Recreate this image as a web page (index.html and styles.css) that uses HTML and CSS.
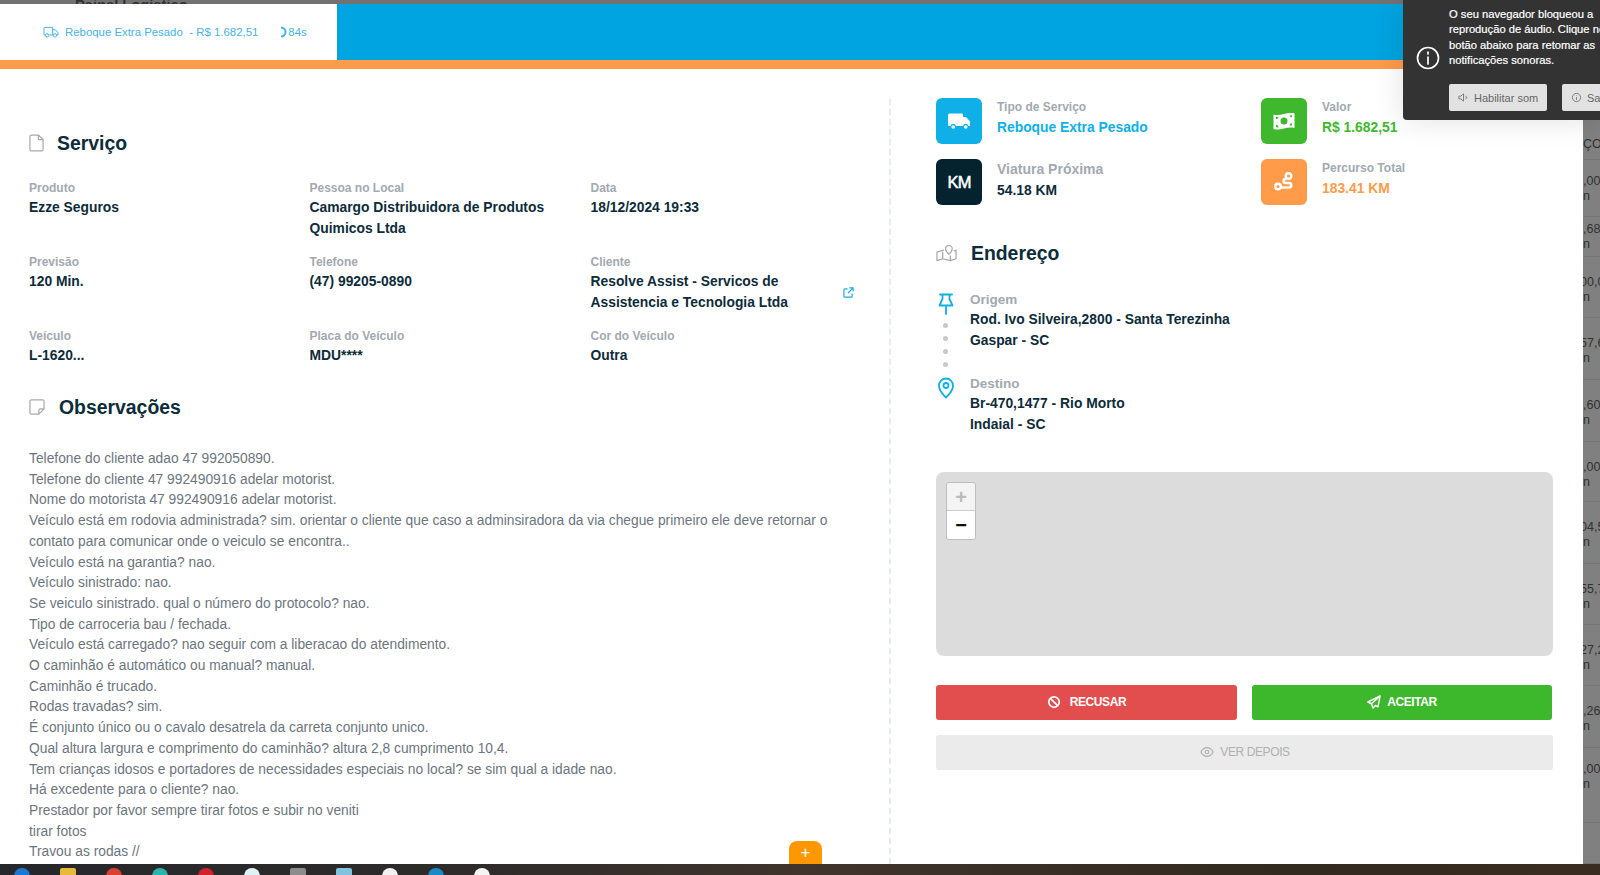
FILE: index.html
```html
<!DOCTYPE html>
<html lang="pt-BR">
<head>
<meta charset="utf-8">
<title>Painel Logístico</title>
<link rel="stylesheet" href="styles.css">
</head>
<body>
<div class="top-strip"><span class="top-title">Painel Logístico</span></div>
<div class="stage">
  <main class="modal">
    <header class="modal-head">
      <div class="tab">
        <svg class="tab-icon" viewBox="0 0 24 24"><path d="M1.5 16.5V6.5a1.5 1.5 0 0 1 1.5-1.500h11.500v11.500M9.500 16.500h6M14.500 8.500h4l4 4.500v3.500h-2M1.500 16.500h1"/><circle cx="6" cy="17" r="2.500"/><circle cx="18" cy="17" r="2.500"/></svg>
        <span class="tab-name">Reboque Extra Pesado</span>
        <span class="tab-price">- R$ 1.682,51</span>
        <svg class="tab-spin" viewBox="0 0 10 12"><path d="M3 1.500a4.500 4.500 0 0 1 0 9"/></svg>
        <span class="tab-time">84s</span>
      </div>
      <div class="head-fill"></div>
    </header>
    <div class="modal-body">
      <section class="left">
        <h2 class="title title-service">
          <svg class="title-icon" viewBox="0 0 16 19"><path d="M1 2.500A1.500 1.500 0 0 1 2.500 1H10l5 5v10.500a1.500 1.500 0 0 1-1.500 1.500h-11A1.500 1.500 0 0 1 1 16.500zM10 1v5h5"/></svg>
          Serviço
        </h2>
        <div class="facts">
          <div class="fact"><span class="label">Produto</span><span class="value">Ezze Seguros</span></div>
          <div class="fact"><span class="label">Pessoa no Local</span><span class="value">Camargo Distribuidora de Produtos Quimicos Ltda</span></div>
          <div class="fact"><span class="label">Data</span><span class="value">18/12/2024 19:33</span></div>
          <div class="fact"><span class="label">Previsão</span><span class="value">120 Min.</span></div>
          <div class="fact"><span class="label">Telefone</span><span class="value">(47) 99205-0890</span></div>
          <div class="fact fact-link"><span class="label">Cliente</span><span class="value">Resolve Assist - Servicos de Assistencia e Tecnologia Ltda</span>
            <svg class="ext" viewBox="0 0 12 12"><path d="M5 2H2a1 1 0 0 0-1 1v7a1 1 0 0 0 1 1h7a1 1 0 0 0 1-1V7M7 1h4v4M11 1 5.500 6.500"/></svg>
          </div>
          <div class="fact"><span class="label">Veículo</span><span class="value">L-1620...</span></div>
          <div class="fact"><span class="label">Placa do Veículo</span><span class="value">MDU****</span></div>
          <div class="fact"><span class="label">Cor do Veículo</span><span class="value">Outra</span></div>
        </div>
        <h2 class="title title-notes">
          <svg class="title-icon title-icon-note" viewBox="0 0 17 17"><path d="M16 10.500V2.500A1.500 1.500 0 0 0 14.500 1h-12A1.500 1.500 0 0 0 1 2.500v12A1.500 1.500 0 0 0 2.500 16h8zM16 10.500h-4a1.500 1.500 0 0 0-1.500 1.500v4"/></svg>
          Observações
        </h2>
        <div class="notes">
          <p>Telefone do cliente adao 47 992050890.</p>
          <p>Telefone do cliente 47 992490916 adelar motorist.</p>
          <p>Nome do motorista 47 992490916 adelar motorist.</p>
          <p>Veículo está em rodovia administrada? sim. orientar o cliente que caso a adminsiradora da via chegue primeiro ele deve retornar o contato para comunicar onde o veiculo se encontra..</p>
          <p>Veículo está na garantia? nao.</p>
          <p>Veículo sinistrado: nao.</p>
          <p>Se veiculo sinistrado. qual o número do protocolo? nao.</p>
          <p>Tipo de carroceria bau / fechada.</p>
          <p>Veículo está carregado? nao seguir com a liberacao do atendimento.</p>
          <p>O caminhão é automático ou manual? manual.</p>
          <p>Caminhão é trucado.</p>
          <p>Rodas travadas? sim.</p>
          <p>É conjunto único ou o cavalo desatrela da carreta conjunto unico.</p>
          <p>Qual altura largura e comprimento do caminhão? altura 2,8 cumprimento 10,4.</p>
          <p>Tem crianças idosos e portadores de necessidades especiais no local? se sim qual a idade nao.</p>
          <p>Há excedente para o cliente? nao.</p>
          <p>Prestador por favor sempre tirar fotos e subir no veniti</p>
          <p>tirar fotos</p>
          <p>Travou as rodas //</p>
        </div>
        <button class="fab">+</button>
      </section>
      <section class="right">
        <div class="cards">
          <div class="card">
            <div class="badge badge-blue"><svg viewBox="0 0 24 24"><path class="fill" d="M1 6A1.500 1.500 0 0 1 2.500 4.500H15a1 1 0 0 1 1 1V8h3l4 4.500V17h-1.600a2.700 2.700 0 0 0-5.300 0H8.900a2.700 2.700 0 0 0-5.300 0H2.500A1.500 1.500 0 0 1 1 15.500z"/><circle class="fill" cx="6.200" cy="18" r="1.800"/><circle class="fill" cx="18.800" cy="18" r="1.800"/></svg></div>
            <div class="card-text"><span class="label">Tipo de Serviço</span><span class="value">Reboque Extra Pesado</span></div>
          </div>
          <div class="card">
            <div class="badge badge-green"><svg viewBox="0 0 24 24"><path class="fill" fill-rule="evenodd" d="M1.500 5.500c7 2.200 13.500-3 21-1v14.500c-7.500-2-14 3.200-21 1zM12 8.500a3.500 3.500 0 1 0 0 7 3.500 3.500 0 0 0 0-7zM4 7.800v2.400a2.500 2.500 0 0 0 2.400-2zM20 6.300l-2.400.1a2.500 2.500 0 0 0 2.400 2zM4 15.800v2.400l2.400.2a2.500 2.500 0 0 0-2.400-2.600zM20 14.200a2.500 2.500 0 0 0-2.400 2.300l2.400.1z"/></svg></div>
            <div class="card-text"><span class="label">Valor</span><span class="value">R$ 1.682,51</span></div>
          </div>
          <div class="card">
            <div class="badge badge-dark"><span class="km">KM</span></div>
            <div class="card-text card-text-tall"><span class="label label-lg">Viatura Próxima</span><span class="value">54.18 KM</span></div>
          </div>
          <div class="card">
            <div class="badge badge-orange"><svg viewBox="0 0 24 24"><circle class="line-w" cx="16.500" cy="6" r="2.800"/><circle class="line-w" cx="6" cy="16.500" r="2.800"/><path class="line-w" d="M8.800 17.500H17a2.200 2.200 0 0 0 0-4.500h-3.500a2 2 0 0 1 0-4"/></svg></div>
            <div class="card-text"><span class="label">Percurso Total</span><span class="value">183.41 KM</span></div>
          </div>
        </div>
        <h2 class="title title-address">
          <svg class="title-icon title-icon-map" viewBox="0 0 22 18"><path d="M8 6 1 8v9l6-2 8 2 6-2V6l-2 .7M7 8v7M15 12v5"/><path d="M13.500 1a3.500 3.500 0 0 0-3.500 3.500c0 2.500 3.500 6 3.500 6s3.500-3.500 3.500-6A3.500 3.500 0 0 0 13.500 1z"/></svg>
          Endereço
        </h2>
        <div class="route">
          <div class="stop">
            <div class="stop-rail">
              <svg class="stop-icon" viewBox="0 0 18 22"><path d="M3 1.500h12M5.500 1.500V6L2.500 12.500h13L12.500 6V1.500M9 12.500V21"/></svg>
              <i class="dot"></i><i class="dot"></i><i class="dot"></i><i class="dot"></i>
            </div>
            <div class="stop-text"><span class="label label-stop">Origem</span><span class="value">Rod. Ivo Silveira,2800 - Santa Terezinha</span><span class="value">Gaspar - SC</span></div>
          </div>
          <div class="stop">
            <div class="stop-rail">
              <svg class="stop-icon" viewBox="0 0 18 22"><path d="M9 20.500S2 14 2 8.500a7 7 0 0 1 14 0C16 14 9 20.500 9 20.500z"/><circle cx="9" cy="8.500" r="2.500"/></svg>
            </div>
            <div class="stop-text"><span class="label label-stop">Destino</span><span class="value">Br-470,1477 - Rio Morto</span><span class="value">Indaial - SC</span></div>
          </div>
        </div>
        <div class="map">
          <div class="zoom">
            <button class="zoom-btn zoom-off">+</button>
            <button class="zoom-btn">−</button>
          </div>
        </div>
        <div class="actions">
          <button class="btn btn-red"><svg viewBox="0 0 16 16"><circle cx="8" cy="8" r="6"/><path d="m3.800 3.800 8.400 8.400"/></svg>RECUSAR</button>
          <button class="btn btn-green"><svg viewBox="0 0 16 16"><path d="M15 1 1 8l4 2 2 5 2.500-3 3 1.500zM15 1 5 10"/></svg>ACEITAR</button>
          <button class="btn btn-grey"><svg viewBox="0 0 16 16"><path d="M1 8s2.500-5 7-5 7 5 7 5-2.500 5-7 5-7-5-7-5z"/><circle cx="8" cy="8" r="2"/></svg>VER DEPOIS</button>
        </div>
      </section>
    </div>
  </main>
  <aside class="behind">
    <div class="row row-head"><span>ÇO</span></div>
    <div class="row row-mid"><span>,00</span><span>n</span></div>
    <div class="row row-short"><span>,68</span><span>n</span></div>
    <div class="row"><span class="clip">00,0</span><span>n</span></div>
    <div class="row"><span class="clip">57,6</span><span>n</span></div>
    <div class="row"><span>,60</span><span>n</span></div>
    <div class="row"><span>,00</span><span>n</span></div>
    <div class="row"><span class="clip">04,5</span><span>n</span></div>
    <div class="row"><span class="clip">55,7</span><span>n</span></div>
    <div class="row"><span class="clip">27,2</span><span>n</span></div>
    <div class="row"><span>,26</span><span>n</span></div>
    <div class="row row-mid"><span>,00</span><span>n</span></div>
    <div class="row"></div>
  </aside>
</div>
<footer class="taskbar">
  <i class="app a1"></i><i class="app a2"></i><i class="app a3"></i><i class="app a4"></i><i class="app a5"></i><i class="app a6"></i><i class="app a7"></i><i class="app a8"></i><i class="app a9"></i><i class="app a10"></i><i class="app a11"></i>
</footer>
<div class="toast">
  <div class="toast-main">
    <svg class="toast-icon" viewBox="0 0 24 24"><circle cx="12" cy="12" r="10.500"/><path d="M12 11v7M12 6v2"/></svg>
    <p class="toast-text">O seu navegador bloqueou a<br>reprodução de áudio. Clique no<br>botão abaixo para retomar as<br>notificações sonoras.</p>
  </div>
  <div class="toast-actions">
    <button class="toast-btn"><svg viewBox="0 0 12 12"><path d="M6 2 3 4.500H1v3h2L6 10zM8 4.500l2 1.500-2 1.500"/></svg>Habilitar som</button>
    <button class="toast-btn"><svg viewBox="0 0 12 12"><circle cx="6" cy="6" r="4.500"/><path d="M6 5.500v3M6 3.500v.5"/></svg>Saiba mais</button>
  </div>
</div>
</body>
</html>
```
FILE: styles.css
```css
* { box-sizing: border-box; }
html, body { margin: 0; height: 100%; }
body {
  height: 875px;
  overflow: hidden;
  display: flex;
  flex-direction: column;
  position: relative;
  background: #808080;
  font-family: "Liberation Sans", Arial, sans-serif;
  color: #0d2c3a;
}
p, h2 { margin: 0; }
button { font-family: inherit; border: 0; cursor: pointer; }

/* page behind the modal */
.top-strip {
  height: 4px;
  flex: none;
  background: #727272;
  overflow: hidden;
  padding-left: 75px;
}
.top-title {
  display: block;
  font-size: 14.700px;
  font-weight: 700;
  line-height: 18px;
  margin-top: -4px;
  color: #333;
}
.stage { flex: 1; min-height: 0; display: flex; }
.behind {
  flex: 1;
  min-width: 0;
  overflow: hidden;
  background: #808080;
  display: grid;
  grid-template-rows: 156px 57px 40px 61px 62px 62px 60px 62px 61px 61px 62px 75px 1fr;
  font-size: 12.500px;
  line-height: 15px;
  color: #303030;
}
.row {
  display: flex;
  flex-direction: column;
  padding-top: 18px;
  white-space: nowrap;
  border-bottom: 1px solid #767676;
}
.row-head { justify-content: flex-end; padding: 0 0 7px; }
.row-mid { padding-top: 14px; }
.row-short { padding-top: 5px; }
.clip { margin-left: -3px; }

/* modal */
.modal {
  width: 1583px;
  flex: none;
  display: flex;
  flex-direction: column;
  background: #fff;
  min-height: 0;
}
.modal-head {
  display: flex;
  height: 65px;
  flex: none;
  border-bottom: 9px solid #ff9b49;
  background: #00a4e0;
}
.tab {
  width: 337px;
  background: #fff;
  display: flex;
  align-items: center;
  padding-left: 43px;
  font-size: 11.400px;
  color: #45b4e6;
}
.tab-icon {
  width: 16px;
  height: 16px;
  margin-right: 6px;
  fill: none;
  stroke: #45b4e6;
  stroke-width: 1.500;
}
.tab-price { margin-left: 6.500px; }
.tab-spin {
  width: 10px;
  height: 12px;
  margin-left: 20px;
  fill: none;
  stroke: #45b4e6;
  stroke-width: 2;
}
.head-fill { flex: 1; }
.modal-body {
  flex: 1;
  min-height: 0;
  display: flex;
  overflow: hidden;
}

.left {
  position: relative;
  width: 891px;
  flex: none;
  margin-top: 30px;
  padding: 0 30px 0 29px;
  border-right: 2px dashed #e2edf3;
}
.title {
  display: flex;
  align-items: center;
  font-size: 19.400px;
  font-weight: 700;
  line-height: 24px;
  color: #0d2c3a;
}
.title-service { margin-top: 32px; gap: 13px; }
.title-notes { margin-top: 29px; gap: 14px; }
.title-address { margin-top: 36px; gap: 14px; }
.title-icon {
  width: 15px;
  height: 18px;
  fill: none;
  stroke: #a9a9a9;
  stroke-width: 1.300;
  stroke-linejoin: round;
  stroke-linecap: round;
}
.title-icon-note { width: 16px; height: 16px; }
.title-icon-map { width: 21px; height: 18px; }

.facts {
  margin-top: 25px;
  display: grid;
  grid-template-columns: 280.500px 281px 1fr;
  grid-template-rows: 74px 74px auto;
}
.fact { position: relative; display: flex; flex-direction: column; padding-right: 30px; }
.fact .label { line-height: 17px; }
.label {
  display: block;
  font-size: 12px;
  line-height: 16px;
  font-weight: 700;
  color: #a2a9b1;
}
.label-lg { font-size: 14px; line-height: 18px; }
.label-stop { font-size: 13.500px; line-height: 17.500px; }
.value {
  display: block;
  font-size: 13.850px;
  line-height: 21px;
  font-weight: 700;
  color: #0d2c3a;
}
.fact-link { padding-right: 50px; }
.ext {
  position: absolute;
  right: 5px;
  top: 33px;
  width: 11px;
  height: 11px;
  fill: none;
  stroke: #1ea8e0;
  stroke-width: 1.300;
}
.notes {
  margin-top: 30px;
  font-size: 13.800px;
  line-height: 20.700px;
  color: #6c757d;
}
.fab {
  position: absolute;
  left: 789px;
  top: 742px;
  width: 33px;
  height: 23px;
  padding: 0;
  border-radius: 8px 8px 0 0;
  background: #ff9800;
  color: #fff;
  font-size: 17px;
  line-height: 20px;
}

.right { flex: 1; min-width: 0; padding: 29px 30px 0 45px; }
.cards {
  display: grid;
  grid-template-columns: 325px 1fr;
  grid-auto-rows: 46px;
  row-gap: 15px;
}
.card { display: flex; gap: 15px; }
.card-text .label { margin-bottom: 1.500px; }
.badge {
  width: 46px;
  height: 46px;
  flex: none;
  border-radius: 6px;
  display: flex;
  align-items: center;
  justify-content: center;
}
.badge svg { width: 24px; height: 24px; }
.badge-blue { background: #0fb0e8; }
.badge-green { background: #3fb82e; }
.badge-dark { background: #04232f; }
.badge-orange { background: #ff9b49; }
.fill { fill: #fff; }
.line-w { fill: none; stroke: #fff; stroke-width: 2.400; stroke-linecap: round; }
.km {
  color: #fff;
  font-size: 16.500px;
  font-weight: 400;
  letter-spacing: -.8px;
  -webkit-text-stroke: .5px #fff;
}
.card-text { padding-top: 1px; }
.card-text-tall { padding-top: 1px; }
.card:nth-child(1) .value { color: #0fb0e8; }
.card:nth-child(2) .value { color: #3fb82e; }
.card:nth-child(4) .value { color: #ff9b49; }

.route { margin-top: 26px; }
.stop { display: flex; gap: 15px; }
.stop + .stop { margin-top: 8px; }
.stop-rail { width: 19px; padding-top: 2px; display: flex; flex-direction: column; align-items: center; }
.stop-icon {
  width: 18px;
  height: 22px;
  flex: none;
  fill: none;
  stroke: #0fb0e8;
  stroke-width: 1.800;
  stroke-linecap: round;
  stroke-linejoin: round;
}
.dot {
  width: 5px;
  height: 5px;
  margin-top: 8px;
  border-radius: 50%;
  background: #c9c9c9;
}
.map {
  margin-top: 37px;
  height: 184px;
  border-radius: 8px;
  background: #dcdcdc;
  padding: 10px;
}
.zoom {
  width: 30px;
  border: 1px solid #bdbdbd;
  border-radius: 3px;
  overflow: hidden;
  display: flex;
  flex-direction: column;
}
.zoom-btn {
  height: 28px;
  padding: 0;
  background: #fff;
  color: #111;
  font-size: 20px;
  font-weight: 700;
  line-height: 28px;
}
.zoom-off { background: #f4f4f4; color: #bbb; border-bottom: 1px solid #ccc; }
.actions {
  margin-top: 29px;
  display: grid;
  grid-template-columns: 301px 1fr;
  column-gap: 15px;
  row-gap: 15px;
}
.btn {
  height: 35px;
  border-radius: 3px;
  display: flex;
  align-items: center;
  justify-content: center;
  gap: 9px;
  color: #fff;
  font-size: 12px;
  font-weight: 700;
  letter-spacing: -.4px;
}
.btn svg {
  width: 14px;
  height: 14px;
  fill: none;
  stroke: currentColor;
  stroke-width: 2;
  stroke-linejoin: round;
}
.btn-red { background: #e24e4e; }
.btn-green { background: #3db82d; margin-right: 1px; gap: 6px; }
.btn-green svg { stroke-width: 1.600; }
.btn-grey {
  grid-column: 1 / -1;
  background: #ebebeb;
  color: #b0b0b0;
  font-weight: 400;
  gap: 6px;
  padding-right: 5px;
}
.btn-grey svg { stroke-width: 1.300; }

/* taskbar */
.taskbar {
  height: 11px;
  flex: none;
  overflow: hidden;
  display: flex;
  gap: 30px;
  padding: 4px 0 0 14px;
  background: linear-gradient(90deg, #26272b 0, #2e2b2a 30%, #40342c 50%, #32291f 80%, #3a2c20 100%);
}
.app { width: 16px; height: 16px; flex: none; border-radius: 50%; }
.a1 { background: #1a78d4; }
.a2 { background: #e8b93a; border-radius: 2px; }
.a3 { background: #d9402f; }
.a4 { background: #2bb3ae; }
.a5 { background: #d3202a; }
.a6 { background: #dff3f7; }
.a7 { background: #8c8c8c; border-radius: 2px; }
.a8 { background: #7fc4de; border-radius: 2px; }
.a9 { background: #f2f2f2; }
.a10 { background: #1a8ac6; }
.a11 { background: #f5f5f5; }

/* toast */
.toast {
  position: absolute;
  left: 1403px;
  top: 0;
  width: 197px;
  height: 120px;
  overflow: hidden;
  background: #333;
  border-radius: 0 0 0 4px;
  box-shadow: 0 0 30px rgba(0, 0, 0, .12);
  padding: 7px 0 0 13px;
  font-size: 11.200px;
  color: #fff;
}
.toast-main { display: flex; align-items: flex-end; gap: 9px; width: 300px; }
.toast-icon {
  width: 24px;
  height: 24px;
  flex: none;
  margin-bottom: -2px;
  fill: none;
  stroke: #fff;
  stroke-width: 1.700;
  stroke-linecap: round;
}
.toast-text {
  line-height: 15.300px;
  white-space: nowrap;
  -webkit-text-stroke: .2px #fff;
}
.toast-actions { display: flex; gap: 15px; margin: 16px 0 0 33px; width: 300px; }
.toast-btn {
  height: 27px;
  width: 98px;
  flex: none;
  padding: 0 0 0 9px;
  border-radius: 2px;
  background: #e2e2e2;
  color: #666;
  font-size: 11px;
  display: flex;
  align-items: center;
  gap: 5px;
  white-space: nowrap;
}
.toast-btn svg {
  width: 11px;
  height: 11px;
  flex: none;
  fill: none;
  stroke: #777;
  stroke-width: 1;
}
```
